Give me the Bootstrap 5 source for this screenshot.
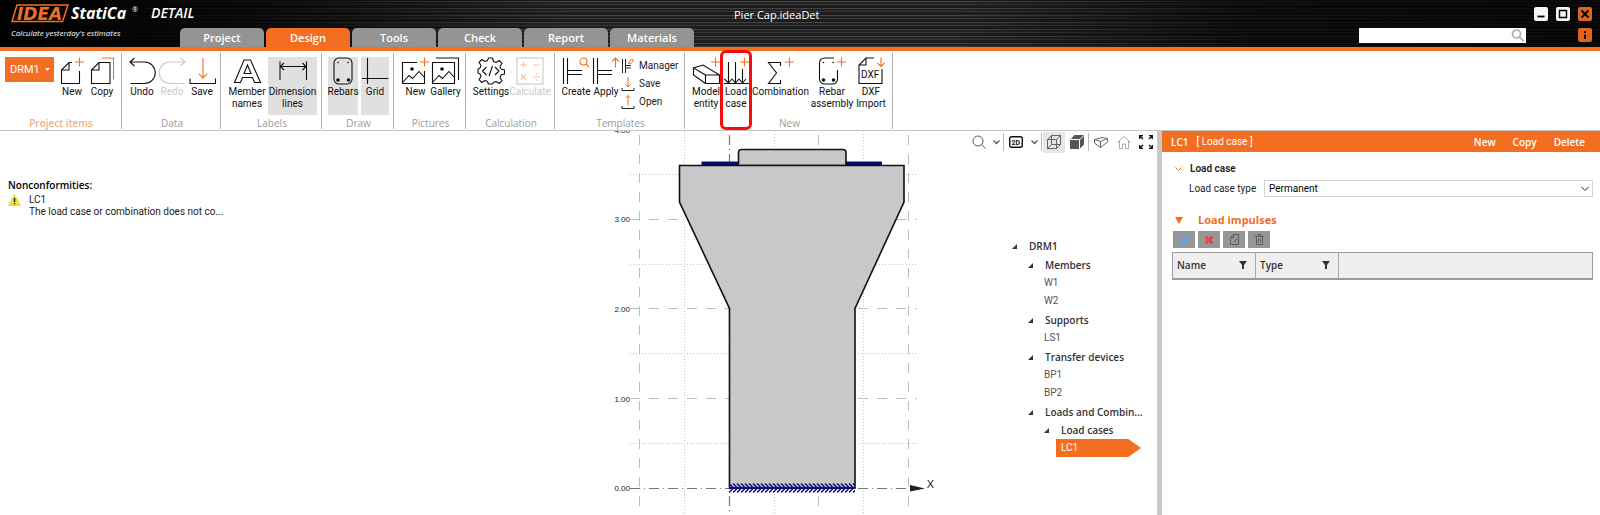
<!DOCTYPE html>
<html lang="en">
<head>
<meta charset="utf-8">
<meta name="viewport" content="width=device-width, initial-scale=1">
<title>Pier Cap.ideaDet</title>
<link href="https://cdn.jsdelivr.net/npm/bootstrap@5.3.0/dist/css/bootstrap.min.css" rel="stylesheet">
<style>
:root{--orange:#f36e21;--ink:#222}
body{font:10px/12px Roboto,"Open Sans",sans-serif;color:var(--ink);background:#fff;min-height:100vh;display:flex;flex-direction:column;overflow:hidden}
button{font:inherit;color:inherit;background:none;border:0;padding:0}
a{color:inherit;text-decoration:none}
svg{display:block;fill:none;stroke:currentColor;overflow:visible}
.semi{font-family:"Open Sans",sans-serif;font-weight:600}
.titlebar{height:51px;border-bottom:4px solid var(--orange);color:#fff;
 background:linear-gradient(90deg,#000 0,#000b 16%,#0000 36%,#0000 60%,#000a 78%,#000c 100%),
 repeating-linear-gradient(180deg,#1b1b1b 0 1px,#444 1px 2px,#222 2px 4px,#383838 4px 5px,#1e1e1e 5px 7px)}
.brand{width:172px;padding:4px 0 0 11px}
.brand-sub{font:italic 8px/12px "Open Sans",sans-serif;padding-top:4px}
.tabs{gap:2px}
.tab-btn{width:84px;height:19px;background:#949494;color:#fff;border-radius:5px 5px 0 0;font:600 11px/19px "Open Sans",sans-serif}
.tab-btn.active{background:var(--orange)}
.doc-title{font:11px/14px "Open Sans",sans-serif;margin-left:-66px}
.win{width:14px;height:14px;border-radius:2px;background:#f4f4f4;color:#000}
.win-o{background:#e0641f}
.wins{gap:8px;padding-top:7px}
.find-row{margin-top:7px}
.info{margin-left:52px}
.finder{width:167px;height:15px;background:#fff;color:#aaa}
.finder input{border:0;min-width:0;font-size:10px;outline:0;background:transparent}
.ribbon{border-bottom:1px solid #c4c4c4;height:80px}
.grp{border-right:1px solid #b4b4b4;margin:2px 0 1px;padding:4px 4px 0 6px}
.grp-name{font-family:"Open Sans",sans-serif;color:#9b9b9b;line-height:12px}
.grp-own{color:#f6ae85;font-weight:600}
.rb{width:30px;height:58px;display:flex;flex-direction:column;align-items:center;gap:1px;color:#111;white-space:nowrap;text-align:center}
.rb svg{width:30px;height:28px;stroke-width:1.1;flex:none}
.rb.on{background:#e0e0e0}
.rb.off{color:#c9c9c9}
.w40{width:40px}.w49{width:49px}.w28{width:28px}.w44{width:44px}.w34{width:34px}.w59{width:59px}
.g-a{width:122px;padding-left:5px}.g-b{width:99px}.g-c{width:101px}.g-d{width:72px}.g-e{width:89px}.g-f{width:130px}.g-g{width:208px}
.o{stroke:var(--orange)}
.k{fill:currentColor;stroke:none}
.drm{width:49px;height:25px;background:var(--orange);color:#fff;font-size:11px;padding:0 4px 0 5px;margin-right:3px}
.sm{gap:4px;height:18px}
.sm svg{width:14px;height:14px}
.marker{position:absolute;left:-1px;top:-7px;width:32px;height:80px;border:3px solid #f50d0d;border-radius:6px;pointer-events:none}
.issues{padding:48px 8px 0}
.issue{padding-top:3px}
.scene{width:340px}
.side{width:217px}
.vt{height:22px}
.vt button{height:21px;display:flex;align-items:center;justify-content:center;color:#555}
.vt .v{width:22px}.vt .c{width:13px}.vt .v24{width:24px}
.vt i{width:1px;height:18px;background:#bbb}
.vt .on{background:#e6e6e6;margin:0 1px}
.vt .dark{color:#111}.vt .pale{color:#aaa}
.tree{padding:84px 0 0 72px}
.tree ul{list-style:none;margin:0;padding:0}
.tree li li{padding-left:16px}
.tree .node{height:18px;display:flex;align-items:center;color:#333;white-space:nowrap}
.tree .hd{font-family:"Open Sans",sans-serif;font-weight:600}
.tree ul ul>li>.hd{margin-top:1px}
.tree ul ul ul>li>.hd{margin-top:0}
.tree .node button{width:17px;flex:none}
.tree .leaf{padding-left:16px;color:#555}
.tree .sel{color:#fff;background:var(--orange);margin-left:12px;padding-left:5px;width:85px;clip-path:polygon(0 0,85% 0,100% 50%,85% 100%,0 100%)}
.split{width:5px;background:#c8c8c8}
.props{width:438px}
.props-hd{background:var(--orange);color:#fff;height:21px;padding:0 15px 0 9px}
.acts{gap:17px}
.pb{padding:10px 7px 0 10px}
.sect{padding-left:3px;height:14px}
.lab{width:75px;margin-left:17px}
.typ{height:17px;border:1px solid #d4d4d4;color:#000;font-size:10px;line-height:14px;padding:0 4px;border-radius:0;appearance:none;background:#fff}
.tools{gap:3px;padding:4px 0 4px 1px}
.tb{width:22px;height:17px;background:#969696;display:flex;align-items:center;justify-content:center}
.tb svg{color:#5e5e5e}
.imp{border:1px solid #9c9c9c;border-bottom-width:2px;background:#efefef}
.imp th{height:26px;border-right:1px solid #a8a8a8;padding:0 8px 0 4px;width:83px;font:600 10px/12px "Open Sans",sans-serif;color:#333}
.imp th:last-child{width:auto;border:0}
.hd11{font:700 11px/14px "Open Sans",sans-serif;color:var(--orange);gap:15px}
</style>
</head>
<body>
<header class="titlebar d-flex position-relative">
  <div class="brand">
    <svg width="190" height="19" viewBox="0 0 190 19">
      <path d="M6 1H57L51.500 17.500H1Z" stroke="#f36e21" stroke-width="1.500"/>
      <text x="6" y="15.500" fill="#f36e21" stroke="none" font-family="DejaVu Sans" font-weight="700" font-style="italic" font-size="17">IDEA</text>
      <text x="60" y="15" fill="#fff" stroke="none" font-family="Open Sans" font-weight="700" font-style="italic" font-size="16">StatiCa</text>
      <text x="121" y="8" fill="#fff" stroke="none" font-family="Open Sans" font-size="7">®</text>
      <text x="140" y="14" fill="#fff" stroke="none" font-family="Open Sans" font-weight="600" font-style="italic" font-size="14">DETAIL</text>
    </svg>
    <div class="brand-sub text-nowrap">Calculate yesterday's estimates</div>
  </div>
  <nav class="tabs d-flex align-items-end ms-2">
    <button class="tab-btn">Project</button><button class="tab-btn active">Design</button><button class="tab-btn">Tools</button><button class="tab-btn">Check</button><button class="tab-btn">Report</button><button class="tab-btn">Materials</button>
  </nav>
  <div class="doc-title position-absolute start-50 top-0 pt-2">Pier Cap.ideaDet</div>
  <div class="ms-auto pe-1 me-1">
    <div class="wins d-flex justify-content-end">
      <button class="win" aria-label="Minimize"><svg width="14" height="14"><path d="M3.500 9.500h7" stroke-width="1.800"/></svg></button>
      <button class="win" aria-label="Maximize"><svg width="14" height="14"><path d="M3.500 3.500h7v7h-7z" stroke-width="1.400"/></svg></button>
      <button class="win win-o" aria-label="Close"><svg width="14" height="14"><path d="M3.500 3.500l7 7m0-7l-7 7" stroke-width="1.900"/></svg></button>
    </div>
    <div class="find-row d-flex justify-content-end">
      <label class="finder d-flex align-items-center"><input class="flex-grow-1" type="text" aria-label="Search"><svg width="15" height="15" stroke-width="1.700"><circle cx="5.500" cy="6" r="4"/><path d="M8.500 9l4.500 4.500"/></svg></label>
      <button class="win win-o info" aria-label="Info"><svg width="14" height="14"><path d="M7 3v2M7 6.500v4.500" stroke-width="1.800"/></svg></button>
    </div>
  </div>
</header>

<section class="ribbon d-flex" aria-label="Ribbon">
  <div class="grp g-a d-flex flex-column justify-content-between">
    <div class="d-flex">
      <button class="drm d-flex align-items-center justify-content-between">DRM1<svg width="5" height="3" class="k"><path d="M0 0h5L2.500 3z"/></svg></button>
      <button class="rb"><svg viewBox="0 0 30 28"><path d="M22.500 14V26.500H4.500V13L12 5.500H15M5 13H12V6"/><path class="o" d="M22.500.5v9M18 5h9"/></svg>New</button>
      <button class="rb"><svg viewBox="0 0 30 28"><path d="M23 5.500V26.500H4.500V13L12 5.500ZM5 13H12V6"/><path class="o" d="M15 1H26.500V22.500"/></svg>Copy</button>
    </div>
    <div class="grp-name grp-own text-center">Project items</div>
  </div>
  <div class="grp g-b d-flex flex-column justify-content-between">
    <div class="d-flex justify-content-center">
      <button class="rb"><svg viewBox="0 0 30 28"><path d="M3 5H17.500a10.750 10.750 0 0 1 0 21.500H3.500M7.500 1L3 5l4.500 4"/></svg>Undo</button>
      <button class="rb off" disabled><svg viewBox="0 0 30 28"><path d="M28 5H13a10.750 10.750 0 0 0 0 21.500H27.500M23.500 1L28 5l-4.500 4"/></svg>Redo</button>
      <button class="rb"><svg viewBox="0 0 30 28"><path d="M3 21.500v5h25.500v-5"/><path class="o" d="M16 1v20M12 17l4 4 4-4"/></svg>Save</button>
    </div>
    <div class="grp-name text-center">Data</div>
  </div>
  <div class="grp g-c d-flex flex-column justify-content-between">
    <div class="d-flex justify-content-between">
      <button class="rb w40"><svg viewBox="0 0 30 28"><path d="M2.500 25.500L12 3H18.500L28.500 25.500H22.500L20.500 20.500H10.500L8.500 25.500ZM12 16.500H19L15.500 8Z"/></svg>Member<br>names</button>
      <button class="rb on w49"><svg viewBox="0 0 30 28"><path d="M2 4.500V23M28.500 4.500V23M2.500 9.500H28M6 6L2.500 9.500 6 13M24.500 6L28 9.500 24.500 13"/></svg>Dimension<br>lines</button>
    </div>
    <div class="grp-name text-center">Labels</div>
  </div>
  <div class="grp g-d d-flex flex-column justify-content-between">
    <div class="d-flex justify-content-between">
      <button class="rb on"><svg viewBox="0 0 30 28"><rect x="6" y="1" width="18" height="26" rx="5"/><g class="k"><circle cx="10" cy="5.500" r=".8"/><circle cx="20" cy="5.500" r=".8"/><circle cx="10" cy="23" r="1.800"/><circle cx="20.500" cy="23" r="1.800"/></g></svg>Rebars</button>
      <button class="rb on w28"><svg viewBox="0 0 30 28"><path d="M7.500 1V27M2 21.500H28.500"/></svg>Grid</button>
    </div>
    <div class="grp-name text-center">Draw</div>
  </div>
  <div class="grp g-d d-flex flex-column justify-content-between">
    <div class="d-flex justify-content-center">
      <button class="rb"><svg viewBox="0 0 30 28"><path d="M16 5.500H1.500V26.500H23.500V14M2 25L8 18.500l3.500 3L18 14.500l5.500 6"/><circle class="k" cx="11" cy="12" r="1.800"/><path class="o" d="M23.500.5v9M19 5h9"/></svg>New</button>
      <button class="rb"><svg viewBox="0 0 30 28"><path d="M1.500 5.500H23.500V26.500H1.500ZM2 25L8 18.500l3.500 3L18 14.500l5.500 6M5 1H27.500V23"/><circle class="k" cx="11" cy="12" r="1.800"/></svg>Gallery</button>
    </div>
    <div class="grp-name text-center">Pictures</div>
  </div>
  <div class="grp g-e d-flex flex-column justify-content-between">
    <div class="d-flex justify-content-start">
      <button class="rb w40"><svg viewBox="0 0 30 28"><path stroke-linejoin="round" d="M12.500 1h4l1 3.500 2.500 1 3.200-2 2.800 2.800-2 3.200 1 2.500 3.500 1v4l-3.500 1-1 2.500 2 3.200-2.800 2.800-3.200-2-2.500 1-1 1.500h-4l-1-2.500-2.500-1-3.200 2-2.800-2.800 2-3.200-1-2.500-2-1v-4l2-1 1-2.500-2-3.200 2.800-2.800 3.200 2 2.500-1zM10.500 10L6.500 14l4 4M19 10l4 4-4 4M16.500 9L13 19"/></svg>Settings</button>
      <button class="rb off w40" disabled><svg viewBox="0 0 30 28"><rect x="2" y="1" width="26" height="26"/><path stroke="#f9c3a4" d="M5 8h7M8.500 4.500v7M18 8h7M6 17.500l5 5m0-5l-5 5M18 20h7M21.500 16.500v1.200M21.500 22.500v1.200"/></svg>Calculate</button>
    </div>
    <div class="grp-name text-center">Calculation</div>
  </div>
  <div class="grp g-f d-flex flex-column justify-content-between">
    <div class="d-flex">
      <button class="rb"><svg viewBox="0 0 30 28"><path d="M2.500 1V27M6.500 1V27M6.500 13.500H21M6.500 17.500H21"/><circle class="o" cx="22.500" cy="4.500" r="3.500"/><path class="o" d="M25 7l3 3"/></svg>Create</button>
      <button class="rb"><svg viewBox="0 0 30 28"><path d="M2.500 1V27M6.500 1V27M6.500 13.500H21M6.500 17.500H21"/><path class="o" d="M24.500 10.500V1M21 4.500L24.500 1 28 4.500"/></svg>Apply</button>
      <div>
        <button class="sm d-flex align-items-center"><svg viewBox="0 0 14 14"><path d="M1.500 0V14M4.500 0V14M4.500 6.500H10M4.500 9H10"/><path class="o" d="M7.500 5l1-3 3-2 1 1-2 3z"/></svg>Manager</button>
        <button class="sm d-flex align-items-center"><svg viewBox="0 0 14 14"><path d="M1 11v2.500h12V11"/><path class="o" d="M7 0v10M4.500 7.500L7 10l2.500-2.500"/></svg>Save</button>
        <button class="sm d-flex align-items-center"><svg viewBox="0 0 14 14"><path d="M1 11v2.500h12V11"/><path class="o" d="M7 10.500V.5M4.500 3L7 .5 9.500 3"/></svg>Open</button>
      </div>
    </div>
    <div class="grp-name text-center">Templates</div>
  </div>
  <div class="grp g-g d-flex flex-column justify-content-between">
    <div class="d-flex justify-content-between">
      <button class="rb"><svg viewBox="0 0 30 28"><path d="M14.500 18H28.500V26.500H14.500ZM14.500 18L2.500 11 12 8 28.500 18M2.500 11V18L14.500 26.500"/><path class="o" d="M24.500.5v9M20 5h9"/></svg>Model<br>entity</button>
      <div class="position-relative"><button class="rb"><svg viewBox="0 0 30 28"><path d="M7.500 5V26M14.500 5V26M21.500 12V26M3 26.500H28M3.500 22l4 4 3.500-4 3.500 4 3.500-4 3.500 4 3.500-4"/><path class="o" d="M23.500.5v9M19 5h9"/></svg>Load<br>case</button><span class="marker"></span></div>
      <button class="rb w59"><svg viewBox="0 0 30 28"><path d="M14.500 9V5.500H2.500L10.500 16 2.500 26.500H14.500V23"/><path class="o" d="M23.500.5v9M19 5h9"/></svg>Combination</button>
      <button class="rb w44"><svg viewBox="0 0 30 28"><path d="M17 1H7.500a5 5 0 0 0-5 5V22a5 5 0 0 0 5 5H15.500a5 5 0 0 0 5-5V13"/><g class="k"><circle cx="6.500" cy="5.500" r=".8"/><circle cx="16" cy="5.500" r=".8"/><circle cx="6.500" cy="23" r="1.800"/><circle cx="16.500" cy="23" r="1.800"/></g><path class="o" d="M24.500.5v9M20 5h9"/></svg>Rebar<br>assembly</button>
      <button class="rb w34"><svg viewBox="0 0 30 28"><path d="M18 1H10L3 8V26.500H26V12M3.500 8H10V1.500"/><path class="o" d="M25 .5V9.500M21.500 6L25 9.500 28.500 6"/><text class="k" x="5" y="21" font-size="10" font-family="Roboto">DXF</text></svg>DXF<br>Import</button>
    </div>
    <div class="grp-name text-center">New</div>
  </div>
</section>

<main class="d-flex flex-grow-1">
  <section class="issues flex-grow-1">
    <div class="semi text-black">Nonconformities:</div>
    <div class="issue d-flex">
      <svg width="13" height="12" viewBox="0 0 13 12"><path d="M6.500.5L12.500 11.500H.5Z" fill="#f8e23a" stroke="#d8c22a" stroke-width=".6"/><path d="M6.500 4v4M6.500 9v1.300" stroke="#222" stroke-width="1.500"/></svg>
      <div class="ps-2">LC1<div class="mt-0">The load case or combination does not co...</div></div>
    </div>
  </section>

  <svg class="scene overflow-hidden" height="384" viewBox="600 131 340 384">
    <defs>
      <pattern id="hatch" x="729" y="483" width="4" height="10" patternUnits="userSpaceOnUse"><path d="M-4 .5L.5 5-4 9.500M0 .5L4.500 5 0 9.500M4 .5L8.500 5" stroke="#0a0a7a" stroke-width="1.500"/></pattern>
    </defs>
    <g stroke="#bdbdbd" stroke-dasharray="10 9">
      <path d="M639.500 135V515M818.500 135V515M908.500 135V515M630 219.500H917M630 308.500H917M630 398.500H917"/>
    </g>
    <g stroke="#c4c4c4" stroke-dasharray="1 2">
      <path d="M684.500 131V515M774.500 131V515M863.500 131V515M630 174.500H916M630 264.500H916M630 353.500H916M630 443.500H916"/>
    </g>
    <path d="M729.500 135V515M630 488.500H910" stroke="#777" stroke-width="1.200" stroke-dasharray="10 4 1 4"/>
    <path d="M701.500 161.500H738V165.500H701.500ZM846 161.500H882V165.500H846Z" fill="#0a0a70" stroke="none"/>
    <g fill="#c8c8c8" stroke="#111" stroke-width="1.600">
      <path d="M738.500 165.500V152.500a3 3 0 0 1 3-3H843a3 3 0 0 1 3 3V165.500Z"/>
      <path d="M679.500 165.500H904V202L855 308.500V488H729.500V308.500L679.500 202Z"/>
    </g>
    <rect x="729" y="483" width="126" height="10" fill="url(#hatch)" stroke="none"/>
    <path d="M729 488H855" stroke="#0a0a7a" stroke-width="2"/>
    <path class="k" d="M910 485L925 488.500 910 491.500Z"/>
    <g fill="#222" stroke="none" font-family="Liberation Sans" font-size="8" text-anchor="end">
      <text x="630" y="133">4.00</text><text x="630" y="222">3.00</text><text x="630" y="312">2.00</text><text x="630" y="402">1.00</text><text x="630" y="491">0.00</text>
      <text x="934" y="488" font-size="11">X</text>
    </g>
  </svg>

  <section class="side">
    <div class="vt d-flex align-items-center justify-content-end">
      <button class="v" aria-label="Zoom"><svg width="14" height="14"><circle cx="6" cy="6" r="5"/><path d="M9.500 9.500l4 4"/></svg></button>
      <button class="c" aria-label="Zoom options"><svg width="7" height="4"><path d="M.5.500l3 3 3-3" stroke-width="1.300"/></svg></button><i></i>
      <button class="v24 dark" aria-label="2D view"><svg width="14" height="12"><rect x=".7" y=".7" width="12.600" height="10.600" rx="2" stroke-width="1.400"/><text class="k" x="2.500" y="8.800" font-size="7" font-weight="700">2D</text></svg></button>
      <button class="c" aria-label="View options"><svg width="7" height="4"><path d="M.5.500l3 3 3-3" stroke-width="1.300"/></svg></button><i></i>
      <button class="v on" aria-label="Wireframe"><svg width="14" height="14" stroke-width=".9"><path d="M.5 4.500H9.500V13.500H.5ZM4.500.5H13.500V9.500H4.500ZM.5 4.500l4-4M9.500 4.500l4-4M9.500 13.500l4-4M.5 13.500l4-4"/></svg></button>
      <button class="v" aria-label="Solid"><svg width="14" height="14" class="k"><path d="M0 5H9V14H0ZM.8 4L4.500 0H14L10 4ZM10 5L14 1V9.500L10 13.500Z"/></svg></button><i></i>
      <button class="v24" aria-label="Perspective"><svg width="14" height="11" stroke-width=".9"><path d="M.5 2.500L8 .5 13.500 1.500V5L6.500 10.500 .5 6ZM.5 2.500L6.500 4.500 13.500 1.500M6.500 4.500V10.500"/></svg></button>
      <button class="v pale" aria-label="Home view"><svg width="14" height="13"><path d="M.5 6.500L7 .5l6.500 6M2.500 5V12.500H5.500V8H8.500V12.500H11.500V5"/></svg></button>
      <button class="v dark" aria-label="Full screen"><svg width="14" height="14" stroke-width="1.300"><path d="M.7 4V.7H4M.7.700l3.300 3.300M10 .7H13.300V4M13.300.7L10 4M.7 10V13.300H4M.7 13.300L4 10M10 13.300H13.300V10M13.300 13.300L10 10"/></svg></button>
    </div>
    <nav class="tree" aria-label="Project tree">
      <ul><li><div class="node hd"><button aria-label="Collapse"><svg width="5" height="5" class="k"><path d="M5 0V5H0Z"/></svg></button><a href="#">DRM1</a></div>
        <ul>
          <li><div class="node hd"><button aria-label="Collapse"><svg width="5" height="5" class="k"><path d="M5 0V5H0Z"/></svg></button><a href="#">Members</a></div>
            <a href="#" class="node leaf">W1</a><a href="#" class="node leaf">W2</a></li>
          <li><div class="node hd"><button aria-label="Collapse"><svg width="5" height="5" class="k"><path d="M5 0V5H0Z"/></svg></button><a href="#">Supports</a></div>
            <a href="#" class="node leaf">LS1</a></li>
          <li><div class="node hd"><button aria-label="Collapse"><svg width="5" height="5" class="k"><path d="M5 0V5H0Z"/></svg></button><a href="#">Transfer devices</a></div>
            <a href="#" class="node leaf">BP1</a><a href="#" class="node leaf">BP2</a></li>
          <li><div class="node hd"><button aria-label="Collapse"><svg width="5" height="5" class="k"><path d="M5 0V5H0Z"/></svg></button><a href="#">Loads and Combin...</a></div>
            <ul><li><div class="node hd"><button aria-label="Collapse"><svg width="5" height="5" class="k"><path d="M5 0V5H0Z"/></svg></button><a href="#">Load cases</a></div>
              <a href="#" class="node sel">LC1</a></li></ul></li>
        </ul></li></ul>
    </nav>
  </section>
  <div class="split"></div>

  <aside class="props">
    <div class="props-hd d-flex align-items-center"><span class="semi">LC1</span><span class="ps-2">[ Load case ]</span>
      <div class="acts semi ms-auto d-flex"><button>New</button><button>Copy</button><button>Delete</button></div></div>
    <div class="pb">
      <div class="sect d-flex align-items-center"><svg width="7" height="4" viewBox="0 0 7 4"><path class="o" d="M.5.500l3 3 3-3"/></svg><span class="ms-2 fw-semibold">Load case</span></div>
      <div class="d-flex align-items-center pt-1">
        <label for="lct" class="lab text-nowrap">Load case type</label>
        <div class="position-relative flex-grow-1"><select id="lct" class="typ w-100"><option>Permanent</option></select>
          <svg class="position-absolute end-0 top-50 me-1 translate-middle-y" width="8" height="5"><path d="M.5.500l3.500 3.500L7.500.5"/></svg></div>
      </div>
      <div class="sect hd11 d-flex align-items-center mt-3"><svg width="8" height="7" class="k"><path d="M0 0H8L4 7Z"/></svg>Load impulses</div>
      <div class="tools d-flex">
        <button class="tb" aria-label="Add"><svg width="10" height="10" class="k"><path fill="#6fa3e0" d="M3.500 0h3v3.500H10v3H6.500V10h-3V6.500H0v-3h3.500z"/></svg></button>
        <button class="tb" aria-label="Remove"><svg width="10" height="10"><path stroke="#e0454b" stroke-width="3" d="M1.500 1.500l7 7m0-7l-7 7"/></svg></button>
        <button class="tb" aria-label="Edit"><svg width="9" height="11"><path d="M3.500.5H8.500V10.500H.5V3.500ZM3.500.5V3.500H.5M4 8l3-3"/></svg></button>
        <button class="tb" aria-label="Delete all"><svg width="9" height="11"><path d="M0 2.500H9M3 2V.5H6V2M1.500 3V10.500H7.500V3M3.500 4.500v4M5.500 4.500v4"/></svg></button>
      </div>
      <table class="imp w-100"><thead><tr>
        <th><div class="d-flex justify-content-between align-items-center">Name<svg width="8" height="8" class="k"><path d="M0 0H8L5 4V8H3V4Z"/></svg></div></th>
        <th><div class="d-flex justify-content-between align-items-center">Type<svg width="8" height="8" class="k"><path d="M0 0H8L5 4V8H3V4Z"/></svg></div></th>
        <th aria-label="Values"></th></tr></thead></table>
    </div>
  </aside>
</main>
<script src="https://cdn.jsdelivr.net/npm/bootstrap@5.3.0/dist/js/bootstrap.bundle.min.js"></script>
</body>
</html>
